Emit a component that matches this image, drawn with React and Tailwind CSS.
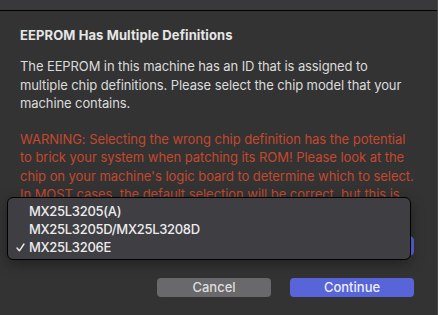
import React from "react";

const font = { fontFamily: "Inter, 'Liberation Sans', sans-serif" };

export default function App() {
  return (
    <div
      className="relative w-[438px] h-[315px] overflow-hidden bg-[#333333] border-r border-[#474747]"
      style={font}
    >
      <div className="h-[10px] bg-[#39393b]" />
      <div className="h-px bg-black" />
      <div className="flex flex-col pl-[20px] pr-[23px] pt-[16px]">
        <div className="text-[13px] leading-[16px] font-bold text-[#e6e6e6] tracking-[0.1px]">
          EEPROM Has Multiple Definitions
        </div>
        <div className="mt-[14px] text-[13px] leading-[18.5px] text-[#dcdcdc] tracking-[-0.1px] whitespace-nowrap">
          <div>The EEPROM in this machine has an ID that is assigned to</div>
          <div>multiple chip definitions. Please select the chip model that your</div>
          <div>machine contains.</div>
        </div>
        <div className="mt-[17px] text-[13px] leading-[18.5px] text-[#c4482e] tracking-[-0.05px] whitespace-nowrap">
          <div>WARNING: Selecting the wrong chip definition has the potential</div>
          <div>to brick your system when patching its ROM! Please look at the</div>
          <div>chip on your machine's logic board to determine which to select.</div>
          <div>In MOST cases, the default selection will be correct, but this is</div>
          <div className="h-[18.5px]" />
        </div>
        <div className="mt-[14px] h-[20px] flex rounded-[5px] overflow-hidden bg-[#5b5b5f]">
          <div className="flex-1" />
          <div className="w-[16px] bg-[#5a64d8] flex flex-col items-center justify-center gap-[2px]">
            <div className="w-[2px] h-[2px] bg-white/80 rounded-full" />
            <div className="w-[2px] h-[2px] bg-white/80 rounded-full" />
          </div>
        </div>
        <div className="mt-[22px] flex justify-end gap-[19px]">
          <button className="w-[114px] h-[19px] rounded-[4px] bg-[#69686b] text-[13px] leading-[19px] font-medium text-[#dedede]">
            Cancel
          </button>
          <button className="w-[124px] h-[19px] rounded-[4px] bg-[#5865d9] text-[13px] leading-[19px] font-medium text-[#eceefc]">
            Continue
          </button>
        </div>
      </div>

      <div className="absolute left-[7px] top-[197px] w-[404px] h-[63px] rounded-[6px] border border-black bg-[#3f3e43] shadow-[0_4px_14px_rgba(0,0,0,0.35)] pt-[4px] text-[13px] font-medium text-[#ececec] tracking-[-0.3px]">
        <div className="h-[18px] leading-[18px] flex items-center">
          <span className="w-[21px]" />
          <span>MX25L3205(A)</span>
        </div>
        <div className="h-[18px] leading-[18px] flex items-center">
          <span className="w-[21px]" />
          <span>MX25L3205D/MX25L3208D</span>
        </div>
        <div className="h-[18px] leading-[18px] flex items-center">
          <span className="w-[21px] flex justify-center pl-[3px]">
            <svg width="9" height="9" viewBox="0 0 9 9" fill="none">
              <path d="M1 5 L3.4 7.8 L8 1" stroke="#ececec" strokeWidth="1.4" strokeLinecap="round" strokeLinejoin="round" />
            </svg>
          </span>
          <span>MX25L3206E</span>
        </div>
      </div>
    </div>
  );
}
